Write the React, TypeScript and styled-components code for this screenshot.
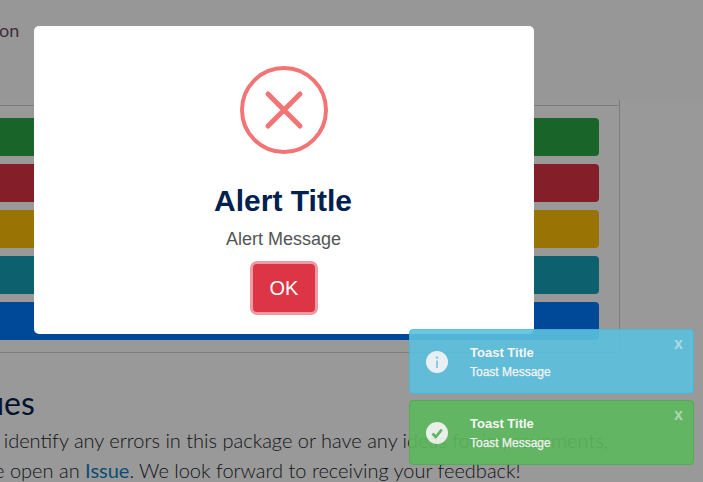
import React from "react";
import styled, { createGlobalStyle } from "styled-components";

const GlobalStyle = createGlobalStyle`
  html, body {
    margin: 0;
    padding: 0;
    height: 100%;
    overflow: hidden;
    background: #fff;
    font-family: Lato, "Liberation Sans", sans-serif;
  }
`;

const Page = styled.div`
  width: 703px;
  height: 482px;
  overflow: hidden;
`;

const Header = styled.header`
  height: 100px;
  box-sizing: border-box;
  padding-top: 18px;
  margin-left: -104px;
  background: #fafcfa;
  color: #6f4a66;
  font-size: 18px;
  line-height: 24px;
`;

const Preview = styled.section`
  width: 660px;
  height: 253px;
  margin-left: -40px;
  box-sizing: border-box;
  padding-top: 5px;
  border-right: 1px solid #d1d1d1;
  border-bottom: 1px solid #d1d1d1;
`;

const PreviewInner = styled.div`
  border-top: 1px solid #d1d1d1;
  padding: 12px 20px 0 0;
  display: flex;
  flex-direction: column;
  gap: 8px;
`;

const ColorButton = styled.button<{ $color: string }>`
  display: block;
  width: 100%;
  height: 38px;
  padding: 0;
  border: 0;
  border-radius: 4px;
  background: ${({ $color }) => $color};
`;

const Issues = styled.section`
  width: 700px;
  margin-left: -50px;
  padding-top: 28px;
`;

const Heading = styled.h2`
  margin: 0;
  font-size: 32px;
  line-height: 44px;
  font-weight: 400;
  color: #001f4d;
`;

const Paragraph = styled.p`
  margin: 0;
  font-size: 20px;
  line-height: 30px;
  font-weight: 300;
  color: #212529;
`;

const IssueLink = styled.a`
  color: #0f7fc0;
  font-weight: 400;
`;

const Overlay = styled.div`
  position: fixed;
  inset: 0;
  display: flex;
  justify-content: center;
  align-items: flex-start;
  padding: 26px 135px 0 0;
  background: rgba(0, 0, 0, 0.4);
  box-sizing: border-box;
`;

const Modal = styled.div`
  width: 500px;
  height: 308px;
  box-sizing: border-box;
  padding-top: 40px;
  display: flex;
  flex-direction: column;
  align-items: center;
  background: #fff;
  border-radius: 5px;
  font-family: "Liberation Sans", Arial, sans-serif;
`;

const AlertIcon = styled.svg`
  display: block;
  width: 88px;
  height: 88px;
`;

const AlertTitle = styled.h2`
  margin: 29px 2px 0 0;
  font-size: 30px;
  line-height: 36px;
  font-weight: 700;
  color: #00204f;
`;

const AlertMessage = styled.div`
  margin: 8px 1px 0 0;
  font-size: 18px;
  line-height: 24px;
  color: #545454;
`;

const OkButton = styled.button`
  margin-top: 13px;
  width: 62px;
  height: 48px;
  padding: 0;
  border: 0;
  border-radius: 4px;
  background: #dc3545;
  color: #fff;
  font-family: inherit;
  font-size: 20px;
  box-shadow: 0 0 0 3px rgba(220, 53, 69, 0.5);
`;

const ToastStack = styled.div`
  position: fixed;
  right: 9px;
  bottom: 17px;
  display: flex;
  flex-direction: column;
  gap: 6px;
`;

const Toast = styled.div<{ $bg: string; $border: string }>`
  position: relative;
  width: 285px;
  height: 65px;
  box-sizing: border-box;
  padding-left: 16px;
  display: flex;
  align-items: center;
  gap: 22px;
  background: ${({ $bg }) => $bg};
  border: 1px solid ${({ $border }) => $border};
  border-radius: 4px;
  opacity: 0.9;
  color: #fff;
  font-family: "Liberation Sans", Arial, sans-serif;
`;

const ToastIcon = styled.svg`
  display: block;
  flex: none;
  width: 22px;
  height: 22px;
`;

const ToastBody = styled.div`
  display: flex;
  flex-direction: column;
  gap: 3px;
  padding-top: 1px;
`;

const ToastTitle = styled.div`
  font-size: 13px;
  line-height: 16px;
  font-weight: 700;
`;

const ToastMessage = styled.div`
  font-size: 12px;
  line-height: 16px;
  -webkit-text-stroke: 0.25px #fff;
`;

const ToastClose = styled.span`
  position: absolute;
  top: 6px;
  right: 10px;
  font-size: 16px;
  line-height: 16px;
  font-weight: 700;
  opacity: 0.5;
`;

const buttons = ["#28a745", "#dc3545", "#ffc107", "#17a2b8", "#007bff"];

export default function App() {
  return (
    <Page>
      <GlobalStyle />
      <Header>Documentation</Header>
      <Preview>
        <PreviewInner>
          {buttons.map((color) => (
            <ColorButton key={color} $color={color} />
          ))}
        </PreviewInner>
      </Preview>
      <Issues>
        <Heading>Issues</Heading>
        <Paragraph>
          If you identify any errors in this package or have any ideas for improvements,
          <br />
          please open an <IssueLink>Issue</IssueLink>. We look forward to receiving your feedback!
        </Paragraph>
      </Issues>
      <Overlay>
        <Modal>
          <AlertIcon viewBox="0 0 88 88">
            <circle cx="44" cy="44" r="42" fill="none" stroke="#f27474" strokeWidth="4" />
            <path d="M28 28 L60 60 M60 28 L28 60" stroke="#f27474" strokeWidth="5" strokeLinecap="round" />
          </AlertIcon>
          <AlertTitle>Alert Title</AlertTitle>
          <AlertMessage>Alert Message</AlertMessage>
          <OkButton>OK</OkButton>
        </Modal>
      </Overlay>
      <ToastStack>
        <Toast $bg="#5bc0de" $border="#46b8da">
          <ToastIcon viewBox="0 0 22 22">
            <circle cx="11" cy="11" r="11" fill="#fff" fillOpacity="0.92" />
            <circle cx="11" cy="6.5" r="1.3" fill="#5bc0de" fillOpacity="0.7" />
            <rect x="10" y="9.5" width="2" height="7.5" rx="0.6" fill="#5bc0de" fillOpacity="0.7" />
          </ToastIcon>
          <ToastBody>
            <ToastTitle>Toast Title</ToastTitle>
            <ToastMessage>Toast Message</ToastMessage>
          </ToastBody>
          <ToastClose>x</ToastClose>
        </Toast>
        <Toast $bg="#5cb85c" $border="#4cae4c">
          <ToastIcon viewBox="0 0 22 22">
            <circle cx="11" cy="11" r="11" fill="#fff" fillOpacity="0.92" />
            <path d="M6.5 11.5 L9.8 15 L15.8 7.5" fill="none" stroke="#5cb85c" strokeWidth="2.8" strokeLinejoin="round" />
          </ToastIcon>
          <ToastBody>
            <ToastTitle>Toast Title</ToastTitle>
            <ToastMessage>Toast Message</ToastMessage>
          </ToastBody>
          <ToastClose>x</ToastClose>
        </Toast>
      </ToastStack>
    </Page>
  );
}
